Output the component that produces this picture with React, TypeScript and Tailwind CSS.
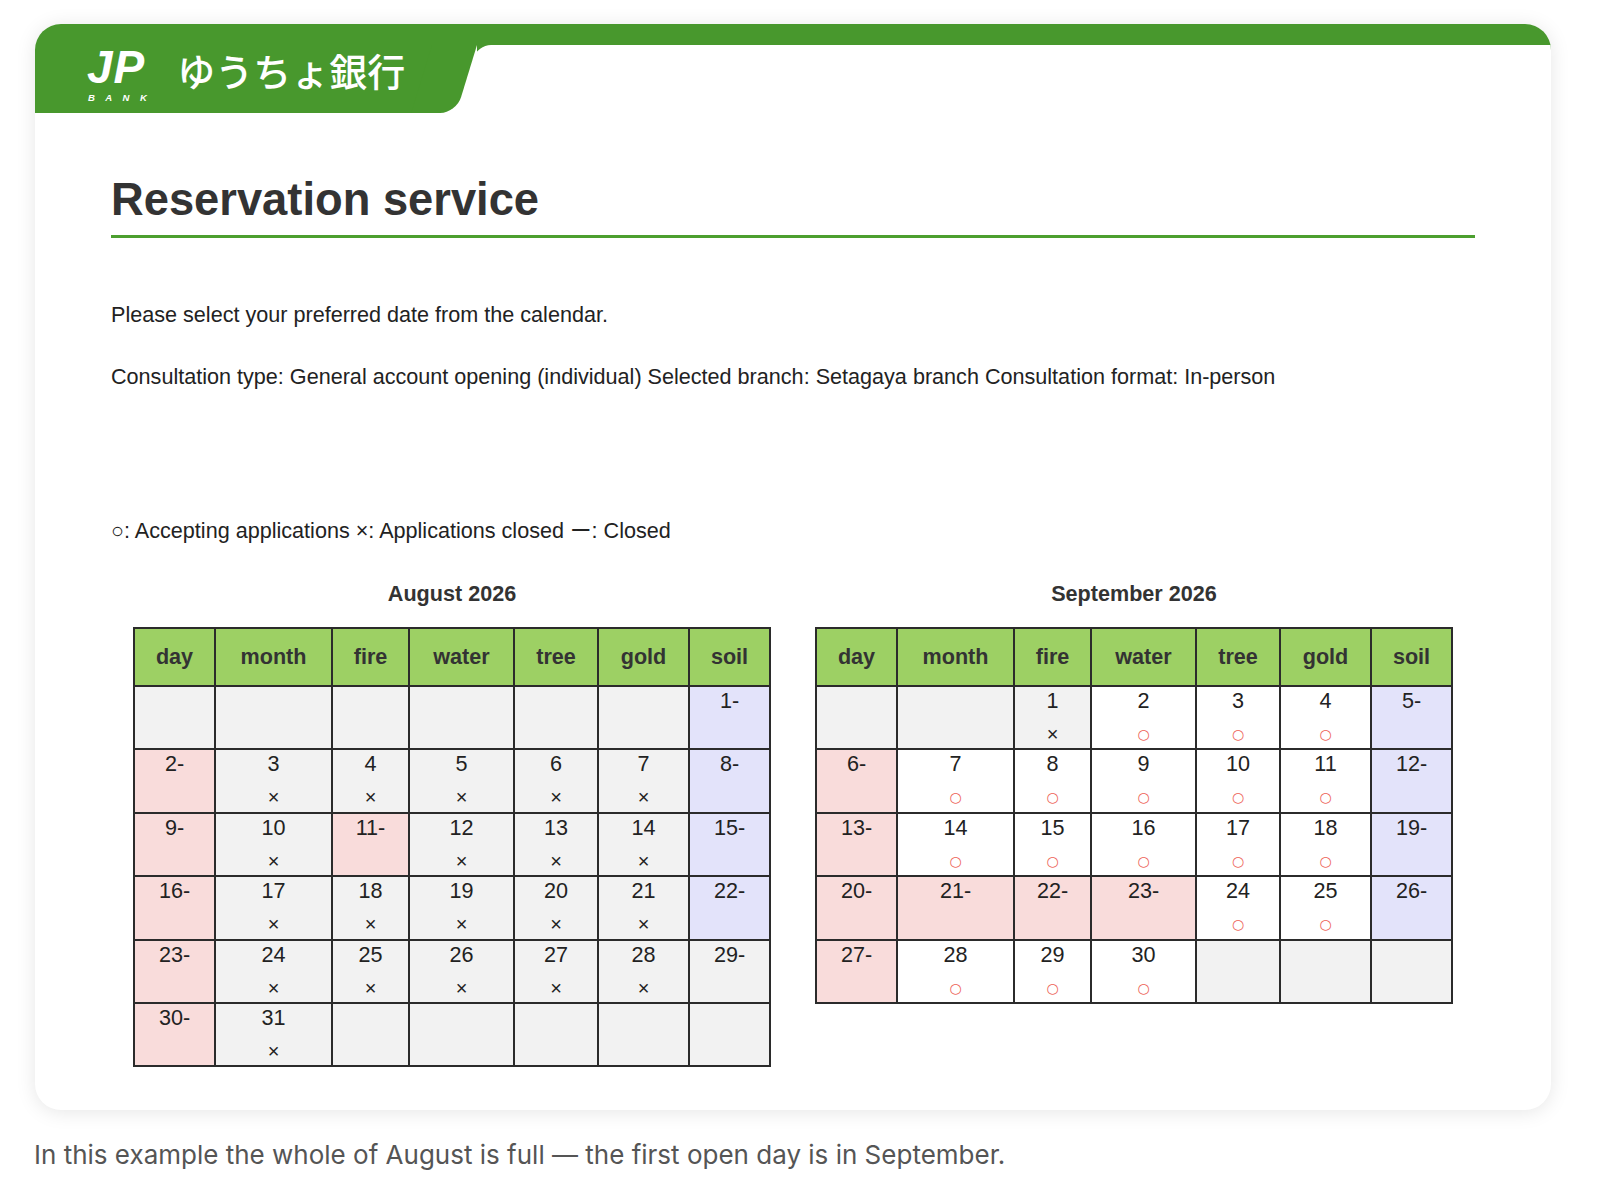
import React from "react";

type Bg = "g" | "p" | "l" | "w";
type Cell = { t?: string; m?: "x" | "o"; bg: Bg };

const bgMap: Record<Bg, string> = {
  g: "bg-[#f2f2f2]",
  p: "bg-[#f9dcdb]",
  l: "bg-[#e3e3fa]",
  w: "bg-white",
};

const E: Cell = { bg: "g" };
const x = (n: number): Cell => ({ t: String(n), m: "x", bg: "g" });
const o = (n: number): Cell => ({ t: String(n), m: "o", bg: "w" });
const p = (s: string): Cell => ({ t: s, bg: "p" });
const l = (s: string): Cell => ({ t: s, bg: "l" });

const august: Cell[][] = [
  [E, E, E, E, E, E, l("1-")],
  [p("2-"), x(3), x(4), x(5), x(6), x(7), l("8-")],
  [p("9-"), x(10), p("11-"), x(12), x(13), x(14), l("15-")],
  [p("16-"), x(17), x(18), x(19), x(20), x(21), l("22-")],
  [p("23-"), x(24), x(25), x(26), x(27), x(28), { t: "29-", bg: "g" }],
  [p("30-"), x(31), E, E, E, E, E],
];

const september: Cell[][] = [
  [E, E, x(1), o(2), o(3), o(4), l("5-")],
  [p("6-"), o(7), o(8), o(9), o(10), o(11), l("12-")],
  [p("13-"), o(14), o(15), o(16), o(17), o(18), l("19-")],
  [p("20-"), p("21-"), p("22-"), p("23-"), o(24), o(25), l("26-")],
  [p("27-"), o(28), o(29), o(30), E, E, E],
];

const heads = ["day", "month", "fire", "water", "tree", "gold", "soil"];
const widths = ["w-[81px]", "w-[117px]", "w-[77px]", "w-[105px]", "w-[84px]", "w-[91px]", "w-[81px]"];

function Calendar({ title, rows }: { title: string; rows: Cell[][] }) {
  return (
    <div className="flex flex-col items-center">
      <div className="text-[21.6px] leading-6 font-bold text-[#333]">{title}</div>
      <table className="mt-[21px] w-[636px] table-fixed border-collapse border-2 border-[#2b2b2b]">
        <colgroup>
          {widths.map((w, i) => (
            <col key={i} className={w} />
          ))}
        </colgroup>
        <thead>
          <tr className="h-[58px]">
            {heads.map((h) => (
              <th
                key={h}
                className="border-2 border-[#2b2b2b] bg-[#9dd064] text-[21.6px] font-bold text-[#333] text-center align-middle"
              >
                {h}
              </th>
            ))}
          </tr>
        </thead>
        <tbody>
          {rows.map((r, ri) => (
            <tr key={ri} className="h-[63.4px]">
              {r.map((c, ci) => (
                <td
                  key={ci}
                  className={`border-2 border-[#2b2b2b] align-top p-0 text-center ${bgMap[c.bg]}`}
                >
                  <div className="flex flex-col items-center pt-[2px] h-[59px]">
                    {c.t && <div className="text-[21.6px] leading-6 text-[#222]">{c.t}</div>}
                    {c.m === "x" && (
                      <div className="mt-[11px] text-[20px] leading-[20px] text-[#222]">×</div>
                    )}
                    {c.m === "o" && (
                      <div className="mt-[11px] text-[14px] leading-[20px] text-[#ee6459] font-['DejaVu_Sans',sans-serif]">
                        ○
                      </div>
                    )}
                  </div>
                </td>
              ))}
            </tr>
          ))}
        </tbody>
      </table>
    </div>
  );
}

function Header() {
  return (
    <div className="flex flex-col h-[89px]">
      <div className="h-[21px] bg-[#48982d]" />
      <div className="flex flex-1 bg-white">
        <div className="w-[397px] bg-[#48982d] flex items-start pl-[52px] pt-[0px] gap-[20px]">
          <div className="flex flex-col items-start text-white italic font-['Liberation_Sans',Arial,sans-serif]">
            <div className="text-[46px] leading-[34px] pt-[5px] font-black tracking-[1px]">JP</div>
            <div className="mt-[9px] text-[9.5px] leading-[10px] font-bold tracking-[1.1em] pl-[1px]">BANK</div>
          </div>
          <div className="mt-[2px] text-[38px] leading-[46px] text-white font-medium font-['Noto_Sans_CJK_JP',sans-serif]">
            ゆうちょ銀行
          </div>
        </div>
        <div className="relative z-10 w-[45px] bg-[#48982d] skew-x-[-17deg] origin-top rounded-br-[16px]" />
        <div className="flex-1 bg-[#48982d]">
          <div className="h-full w-[calc(100%+40px)] bg-white rounded-tl-[14px] skew-x-[-17deg] origin-top" />
        </div>
      </div>
    </div>
  );
}

export default function App() {
  return (
    <div className="w-[1600px] h-[1180px] bg-white pt-[24px] font-['Liberation_Sans',Arial,'Noto_Sans_CJK_JP',sans-serif]">
      <div className="ml-[35px] w-[1516px] bg-white rounded-[26px] overflow-hidden shadow-[0_2px_20px_rgba(0,0,0,0.10)]">
        <Header />
        <div className="px-[76px] pb-[43px]">
          <h1 className="mt-[64px] text-[45.3px] leading-[45px] font-bold text-[#333] pb-[13px] border-b-[3px] border-[#4c9f2f]">
            Reservation service
          </h1>
          <p className="mt-[65px] text-[21.6px] leading-6 text-[#222]">
            Please select your preferred date from the calendar.
          </p>
          <p className="mt-[38px] text-[21.6px] leading-6 text-[#222]">
            Consultation type: General account opening (individual) Selected branch: Setagaya branch Consultation format: In-person
          </p>
          <p className="mt-[130px] text-[21.6px] leading-6 text-[#222]">
            ○: Accepting applications ×: Applications closed ー: Closed
          </p>
          <div className="mt-[39px] grid grid-cols-2 items-start">
            <Calendar title="August 2026" rows={august} />
            <Calendar title="September 2026" rows={september} />
          </div>
        </div>
      </div>
      <p className="mt-[29px] ml-[34px] text-[26px] leading-8 text-[#555] font-['Inter',sans-serif]">
        In this example the whole of August is full — the first open day is in September.
      </p>
    </div>
  );
}
